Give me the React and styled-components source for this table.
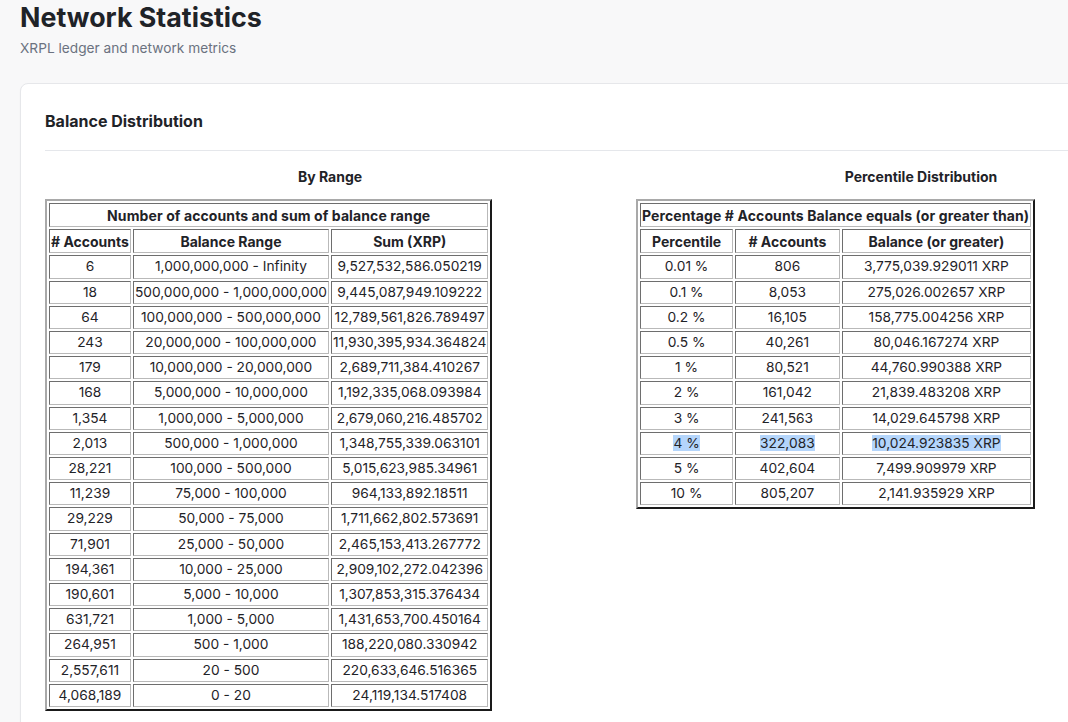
import styled, { createGlobalStyle } from "styled-components";

const GlobalStyle = createGlobalStyle`
  html, body {
    margin: 0;
    padding: 0;
    background: #f8f8f9;
    overflow: hidden;
  }
  body {
    font-family: Inter, "Noto Sans", "Liberation Sans", sans-serif;
    color: #1f2328;
  }
`;

const rangeRows = [
  ["6", "1,000,000,000 - Infinity", "9,527,532,586.050219"],
  ["18", "500,000,000 - 1,000,000,000", "9,445,087,949.109222"],
  ["64", "100,000,000 - 500,000,000", "12,789,561,826.789497"],
  ["243", "20,000,000 - 100,000,000", "11,930,395,934.364824"],
  ["179", "10,000,000 - 20,000,000", "2,689,711,384.410267"],
  ["168", "5,000,000 - 10,000,000", "1,192,335,068.093984"],
  ["1,354", "1,000,000 - 5,000,000", "2,679,060,216.485702"],
  ["2,013", "500,000 - 1,000,000", "1,348,755,339.063101"],
  ["28,221", "100,000 - 500,000", "5,015,623,985.34961"],
  ["11,239", "75,000 - 100,000", "964,133,892.18511"],
  ["29,229", "50,000 - 75,000", "1,711,662,802.573691"],
  ["71,901", "25,000 - 50,000", "2,465,153,413.267772"],
  ["194,361", "10,000 - 25,000", "2,909,102,272.042396"],
  ["190,601", "5,000 - 10,000", "1,307,853,315.376434"],
  ["631,721", "1,000 - 5,000", "1,431,653,700.450164"],
  ["264,951", "500 - 1,000", "188,220,080.330942"],
  ["2,557,611", "20 - 500", "220,633,646.516365"],
  ["4,068,189", "0 - 20", "24,119,134.517408"],
];

const percentileRows = [
  ["0.01 %", "806", "3,775,039.929011 XRP"],
  ["0.1 %", "8,053", "275,026.002657 XRP"],
  ["0.2 %", "16,105", "158,775.004256 XRP"],
  ["0.5 %", "40,261", "80,046.167274 XRP"],
  ["1 %", "80,521", "44,760.990388 XRP"],
  ["2 %", "161,042", "21,839.483208 XRP"],
  ["3 %", "241,563", "14,029.645798 XRP"],
  ["4 %", "322,083", "10,024.923835 XRP", true],
  ["5 %", "402,604", "7,499.909979 XRP"],
  ["10 %", "805,207", "2,141.935929 XRP"],
];

export default function App() {
  return (
    <>
      <GlobalStyle />
      <Page>
        <PageTitle>Network Statistics</PageTitle>
        <PageSubtitle>XRPL ledger and network metrics</PageSubtitle>
        <Card>
          <CardTitle>Balance Distribution</CardTitle>
          <Columns>
            <Column>
              <ColumnTitle>By Range</ColumnTitle>
              <DataTable>
                <tbody>
                  <tr>
                    <Th colSpan={3} $caption>
                      Number of accounts and sum of balance range
                    </Th>
                  </tr>
                  <tr>
                    <Th># Accounts</Th>
                    <Th>Balance Range</Th>
                    <Th>Sum (XRP)</Th>
                  </tr>
                  {rangeRows.map((r) => (
                    <tr key={r[1]}>
                      <Td>{r[0]}</Td>
                      <Td>{r[1]}</Td>
                      <Td>{r[2]}</Td>
                    </tr>
                  ))}
                </tbody>
              </DataTable>
            </Column>
            <Column>
              <ColumnTitle>Percentile Distribution</ColumnTitle>
              <DataTable>
                <tbody>
                  <tr>
                    <Th colSpan={3} $caption>
                      Percentage # Accounts Balance equals (or greater than)
                    </Th>
                  </tr>
                  <tr>
                    <Th>Percentile</Th>
                    <Th># Accounts</Th>
                    <Th>Balance (or greater)</Th>
                  </tr>
                  {percentileRows.map((r) => (
                    <tr key={r[0]}>
                      {r.slice(0, 3).map((v) => (
                        <Td key={v}>
                          {r[3] ? <Selected>{v}</Selected> : v}
                        </Td>
                      ))}
                    </tr>
                  ))}
                </tbody>
              </DataTable>
            </Column>
          </Columns>
        </Card>
      </Page>
    </>
  );
}

const Page = styled.div`
  width: 1260px;
  padding: 0 20px;
`;

const PageTitle = styled.h1`
  margin: 0;
  padding-top: 1px;
  font-size: 26.8px;
  line-height: 32px;
  font-weight: 700;
  color: #1f2328;
`;

const PageSubtitle = styled.p`
  margin: 6px 0 0;
  font-size: 13.7px;
  line-height: 18px;
  color: #6b7280;
`;

const Card = styled.section`
  margin-top: 26px;
  background: #fff;
  border: 1px solid #e6e7ea;
  border-radius: 8px;
  box-shadow: 0 1px 2px rgba(0, 0, 0, 0.03);
  padding: 19px 24px 24px;
`;

const CardTitle = styled.h2`
  margin: 0;
  padding: 6px 0 17px;
  font-size: 16px;
  line-height: 24px;
  font-weight: 700;
  border-bottom: 1px solid #e5e7eb;
`;

const Columns = styled.div`
  display: grid;
  grid-template-columns: 570px 570px;
  column-gap: 21px;
  padding-top: 17px;
`;

const Column = styled.div`
  display: flex;
  flex-direction: column;
  align-items: flex-start;
`;

const ColumnTitle = styled.h3`
  align-self: stretch;
  margin: 0 0 13px;
  text-align: center;
  font-size: 14px;
  line-height: 18px;
  font-weight: 700;
`;

const DataTable = styled.table`
  border-collapse: separate;
  border-spacing: 2px;
  border-style: solid;
  border-width: 2px;
  border-color: #a9a9a9 #1a1a1a #1a1a1a #a9a9a9;
  font-size: 13.75px;
  color: #1f2328;
`;

const Td = styled.td`
  padding: 1px;
  line-height: 19.2px;
  text-align: center;
  white-space: nowrap;
  border: 1px solid;
  border-color: #6e6e6e #b9b9b9 #b9b9b9 #6e6e6e;
`;

const Th = styled(Td).attrs({ as: "th" })`
  padding: 1.5px 1px;
  font-size: 14px;
  font-weight: 700;
  letter-spacing: ${(p) => (p.$caption ? "0.1px" : "0")};
`;

const Selected = styled.span`
  background: #b4d5fb;
`;
